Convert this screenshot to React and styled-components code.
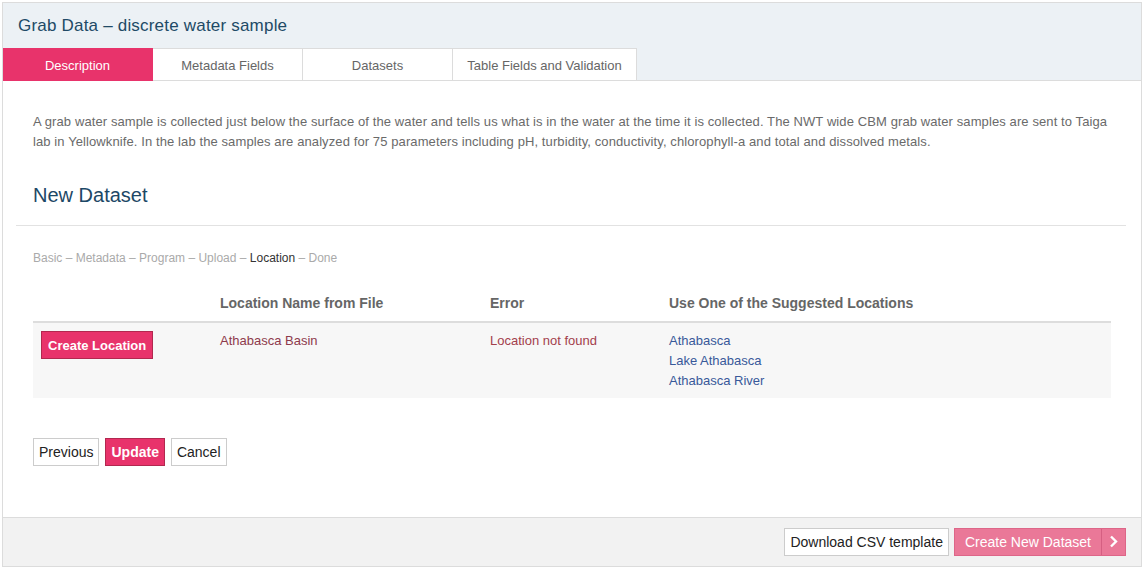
import React from "react";
import styled, { createGlobalStyle } from "styled-components";

const GlobalStyle = createGlobalStyle`
  html, body {
    margin: 0;
    padding: 0;
    background: #fff;
    font-family: "Liberation Sans", Arial, sans-serif;
  }
  * { box-sizing: border-box; }
`;

const tabs = ["Description", "Metadata Fields", "Datasets", "Table Fields and Validation"];

const steps = ["Basic", "Metadata", "Program", "Upload", "Location", "Done"];

const suggestions = ["Athabasca", "Lake Athabasca", "Athabasca River"];

const App = () => <Page>
    <GlobalStyle />
    <Panel>
        <Header>
            <Title>Grab Data – discrete water sample</Title>
            <TabBar>
                {tabs.map((t, i) => <Tab key={t} active={i === 0} wide={i === 3}>{t}</Tab>)}
            </TabBar>
        </Header>
        <Body>
            <Description>
                A grab water sample is collected just below the surface of the water and tells us what is in the water at the time it is collected. The NWT wide CBM grab water samples are sent to Taiga lab in Yellowknife. In the lab the samples are analyzed for 75 parameters including pH, turbidity, conductivity, chlorophyll-a and total and dissolved metals.
            </Description>
            <SectionTitle>New Dataset</SectionTitle>
            <Rule />
            <Steps>
                {steps.map((s, i) => <React.Fragment key={s}>
                    {i > 0 && " – "}
                    <Step current={s === "Location"}>{s}</Step>
                </React.Fragment>)}
            </Steps>
            <Table>
                <colgroup>
                    <col style={{ width: 179 }} />
                    <col style={{ width: 270 }} />
                    <col style={{ width: 179 }} />
                    <col />
                </colgroup>
                <thead>
                    <tr>
                        <Th></Th>
                        <Th>Location Name from File</Th>
                        <Th>Error</Th>
                        <Th>Use One of the Suggested Locations</Th>
                    </tr>
                </thead>
                <tbody>
                    <Row>
                        <Td><Button primary small>Create Location</Button></Td>
                        <Td><ErrorText dark>Athabasca Basin</ErrorText></Td>
                        <Td><ErrorText>Location not found</ErrorText></Td>
                        <Td>
                            {suggestions.map(s => <Suggestion key={s} href="#">{s}</Suggestion>)}
                        </Td>
                    </Row>
                </tbody>
            </Table>
            <Actions>
                <Button>Previous</Button>
                <Button primary>Update</Button>
                <Button>Cancel</Button>
            </Actions>
        </Body>
        <Footer>
            <Button>Download CSV template</Button>
            <SplitButton>
                <span>Create New Dataset</span>
                <Chevron>
                    <svg width="9" height="13" viewBox="0 0 9 13">
                        <path d="M2 1.5 L7 6.5 L2 11.5" fill="none" stroke="#fff" strokeWidth="2.4" />
                    </svg>
                </Chevron>
            </SplitButton>
        </Footer>
    </Panel>
</Page>;

export default App;

const Page = styled.div`
    padding: 2px 3px 2px 2px;
    height: 569px;
`;

const Panel = styled.div`
    border: 1px solid #dcdcdc;
    height: 565px;
    display: flex;
    flex-direction: column;
    background: #fff;
`;

const Header = styled.div`
    background: #ecf1f5;
    border-bottom: 1px solid #dcdcdc;
`;

const Title = styled.h1`
    margin: 0;
    padding: 13px 15px 0;
    height: 45px;
    font-size: 17px;
    font-weight: normal;
    color: #214a66;
    letter-spacing: 0.2px;
`;

const TabBar = styled.div`
    display: flex;
    margin-bottom: -1px;
`;

const Tab = styled.div`
    width: ${p => p.wide ? 184 : 150}px;
    height: 33px;
    padding-top: 1px;
    display: flex;
    align-items: center;
    justify-content: center;
    font-size: 13px;
    color: ${p => p.active ? "#fff" : "#666"};
    background: ${p => p.active ? "#e8336b" : "#fff"};
    border: 1px solid ${p => p.active ? "#e8336b" : "#dcdcdc"};
    border-left: none;
`;

const Body = styled.div`
    flex: 1;
    padding: 31px 30px 0;
`;

const Description = styled.p`
    margin: 0;
    font-size: 13px;
    line-height: 20px;
    letter-spacing: 0.1px;
    color: #6a6a6a;
`;

const SectionTitle = styled.h2`
    margin: 30px 0 0;
    font-size: 20px;
    line-height: 26px;
    font-weight: normal;
    color: #1d4866;
`;

const Rule = styled.hr`
    margin: 17px -15px 0 -17px;
    border: none;
    border-top: 1px solid #e2e2e2;
`;

const Steps = styled.div`
    margin-top: 24px;
    font-size: 12px;
    line-height: 16px;
    color: #aaa;
`;

const Step = styled.span`
    color: ${p => p.current ? "#333" : "#aaa"};
`;

const Table = styled.table`
    margin-top: 19px;
    width: 1078px;
    border-collapse: collapse;
    table-layout: fixed;
    font-size: 13px;
`;

const Th = styled.th`
    text-align: left;
    padding: 8px;
    line-height: 20px;
    font-size: 14px;
    font-weight: bold;
    color: #666;
    border-bottom: 2px solid #dddddd;
`;

const Row = styled.tr`
    background: #f7f7f7;
`;

const Td = styled.td`
    padding: 8px 8px 7px;
    line-height: 20px;
    vertical-align: top;
`;

const ErrorText = styled.span`
    color: ${p => p.dark ? "#8e3a4c" : "#a3404c"};
`;

const Suggestion = styled.a`
    display: block;
    color: #39599a;
    text-decoration: none;
`;

const Button = styled.button`
    height: 28px;
    padding: 0 ${p => p.small ? 6 : 5}px;
    font-family: "Liberation Sans", Arial, sans-serif;
    font-size: ${p => p.small ? 13 : 14}px;
    font-weight: ${p => p.primary ? "bold" : "normal"};
    color: ${p => p.primary ? "#fff" : "#222"};
    background: ${p => p.primary ? "#e8336b" : "#fff"};
    border: 1px solid ${p => p.primary ? "#b2284f" : "#cccccc"};
    border-radius: 0;
    cursor: pointer;
`;

const Actions = styled.div`
    margin-top: 40px;
    display: flex;
    gap: 6px;
`;

const Footer = styled.div`
    height: 49px;
    background: #f2f2f2;
    border-top: 1px solid #dcdcdc;
    display: flex;
    justify-content: flex-end;
    align-items: center;
    gap: 5px;
    padding: 0 15px 1px;
`;

const SplitButton = styled.button`
    height: 28px;
    display: flex;
    align-items: stretch;
    padding: 0;
    font-family: "Liberation Sans", Arial, sans-serif;
    font-size: 14px;
    color: #fff;
    background: #ea7898;
    border: 1px solid #dd6688;
    border-radius: 0;

    span {
        display: flex;
        align-items: center;
        padding: 0 10px;
    }
`;

const Chevron = styled.div`
    width: 24px;
    display: flex;
    align-items: center;
    justify-content: center;
    border-left: 1px solid #d55f82;
`;
